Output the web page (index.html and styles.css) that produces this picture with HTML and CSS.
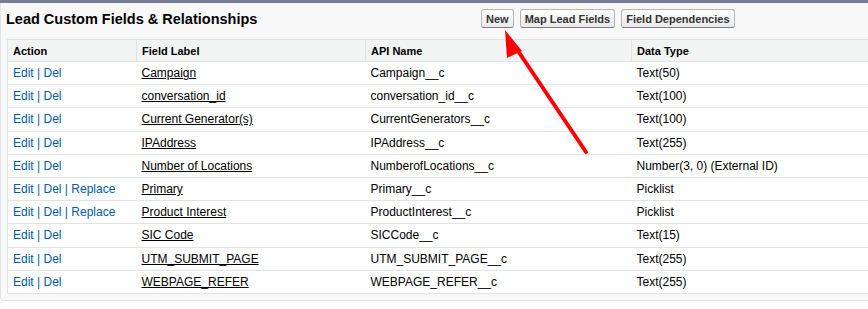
FILE: index.html
```html
<!DOCTYPE html>
<html>
<head>
<meta charset="utf-8">
<link rel="stylesheet" href="styles.css">
</head>
<body>
<div class="topbar"></div>
<div class="panel">
  <div class="pb-header">
    <h3 class="pb-title">Lead Custom Fields &amp; Relationships</h3>
    <div class="pb-buttons">
      <button class="btn">New</button>
      <button class="btn">Map Lead Fields</button>
      <button class="btn">Field Dependencies</button>
    </div>
  </div>
  <table class="list">
    <colgroup>
      <col class="c1"><col class="c2"><col class="c3"><col class="c4">
    </colgroup>
    <thead>
      <tr><th>Action</th><th>Field Label</th><th>API Name</th><th>Data Type</th></tr>
    </thead>
    <tbody>
      <tr><td><a>Edit</a> | <a>Del</a></td><td><u>Campaign</u></td><td>Campaign__c</td><td>Text(50)</td></tr>
      <tr><td><a>Edit</a> | <a>Del</a></td><td><u>conversation_id</u></td><td>conversation_id__c</td><td>Text(100)</td></tr>
      <tr><td><a>Edit</a> | <a>Del</a></td><td><u>Current Generator(s)</u></td><td>CurrentGenerators__c</td><td>Text(100)</td></tr>
      <tr><td><a>Edit</a> | <a>Del</a></td><td><u>IPAddress</u></td><td>IPAddress__c</td><td>Text(255)</td></tr>
      <tr><td><a>Edit</a> | <a>Del</a></td><td><u>Number of Locations</u></td><td>NumberofLocations__c</td><td>Number(3, 0) (External ID)</td></tr>
      <tr><td><a>Edit</a> | <a>Del</a> | <a>Replace</a></td><td><u>Primary</u></td><td>Primary__c</td><td>Picklist</td></tr>
      <tr><td><a>Edit</a> | <a>Del</a> | <a>Replace</a></td><td><u>Product Interest</u></td><td>ProductInterest__c</td><td>Picklist</td></tr>
      <tr><td><a>Edit</a> | <a>Del</a></td><td><u>SIC Code</u></td><td>SICCode__c</td><td>Text(15)</td></tr>
      <tr><td><a>Edit</a> | <a>Del</a></td><td><u>UTM_SUBMIT_PAGE</u></td><td>UTM_SUBMIT_PAGE__c</td><td>Text(255)</td></tr>
      <tr><td><a>Edit</a> | <a>Del</a></td><td><u>WEBPAGE_REFER</u></td><td>WEBPAGE_REFER__c</td><td>Text(255)</td></tr>
    </tbody>
  </table>
</div>
<svg class="arrow" width="868" height="309" viewBox="0 0 868 309">
  <line x1="586" y1="152" x2="514" y2="45" stroke="#ff0000" stroke-width="4" stroke-linecap="round"/>
  <polygon points="505,30 522,51 507,58" fill="#ff0000"/>
</svg>
</body>
</html>
```

FILE: styles.css
```css
html, body {
  margin: 0;
  padding: 0;
  background: #ffffff;
}
body {
  font-family: Arial, "Liberation Sans", sans-serif;
  font-size: 12px;
  color: #000;
  position: relative;
  width: 868px;
  height: 309px;
  overflow: hidden;
}
.topbar {
  height: 3px;
  background: #747e96;
}
.panel {
  background: #f8f8f8;
  border-left: 1px solid #e0e3e5;
  border-bottom: 1px solid #e0e3e5;
  border-radius: 0 0 0 4px;
  padding: 0 0 6px 5px;
}
.pb-header {
  display: flex;
  align-items: flex-start;
  height: 36px;
}
.pb-title {
  margin: 0;
  width: 475px;
  padding-top: 8px;
  font-size: 14.5px;
  font-weight: bold;
  color: #000;
}
.pb-buttons {
  display: flex;
  gap: 6px;
  padding-top: 6px;
}
.btn {
  font-family: Arial, "Liberation Sans", sans-serif;
  font-size: 11px;
  font-weight: bold;
  color: #333;
  height: 19px;
  padding: 0 4px;
  border: 1px solid #b5b5b5;
  border-bottom-color: #7f7f7f;
  border-radius: 3px;
  background: linear-gradient(#ffffff, #e9e9e9);
}
.list {
  border-collapse: collapse;
  background: #fff;
  margin-left: 1px;
  width: calc(100% - 1px);
  table-layout: fixed;
  border: 1px solid #e0e3e5;
  border-right: none;
}
.c1 { width: 129px; }
.c2 { width: 229px; }
.c3 { width: 266px; }
.c4 { width: auto; }
.list th {
  background: #f2f3f3;
  text-align: left;
  font-weight: bold;
  font-size: 11px;
  color: #000;
  height: 21px;
  padding: 0 0 0 5px;
  border-left: 1px solid #e0e3e5;
  border-bottom: 1px solid #e0e3e5;
}
.list td {
  height: 22.2px;
  padding: 0 0 0 5px;
  border-bottom: 1px solid #e3e3e3;
  vertical-align: middle;
  white-space: nowrap;
}
.list td:nth-child(1) { color: #015ba7; }
.list a { color: #015ba7; }
.list u { color: #000; }
.arrow {
  position: absolute;
  left: 0;
  top: 0;
  pointer-events: none;
}
```
